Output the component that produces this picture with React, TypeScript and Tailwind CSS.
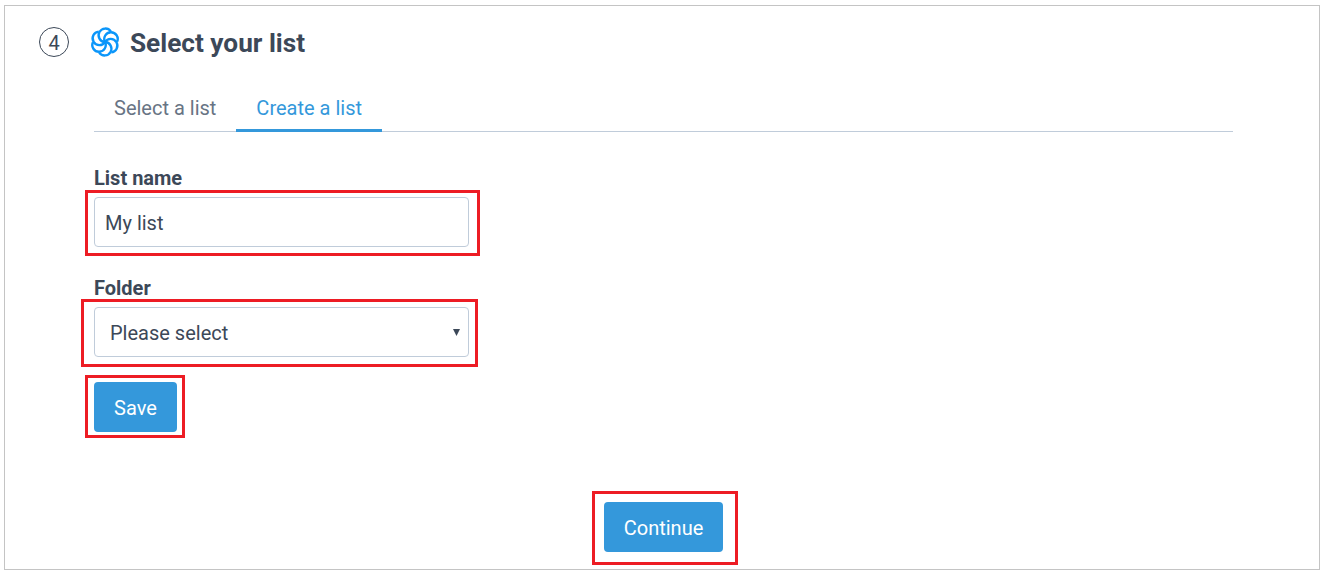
import React from "react";

function Logo() {
  const petals = [0, 60, 120, 180, 240, 300];
  return (
    <svg width="30" height="30" viewBox="0.5 0.5 29 29" fill="none" stroke="#0b96fa" strokeWidth="2.3">
      {petals.map((angle) => (
        <path key={angle} d="M15 15 A6.5 6.5 0 1 1 20.63 4.75" transform={`rotate(${angle} 15 15)`} />
      ))}
    </svg>
  );
}

function RedBox({ className }: { className: string }) {
  return <span className={`pointer-events-none absolute border-[3px] border-[#ed1c24] ${className}`} />;
}

export default function App() {
  return (
    <div className="h-[574px] w-[1326px] bg-white pl-1 pt-[5px] font-['Roboto',sans-serif] text-[#3c4858]">
      <div className="relative h-[565px] w-[1316px] border border-[#c4c4c4]">
        <div className="flex items-center pl-[34px] pt-[21px]">
          <div className="flex h-[30px] w-[30px] items-center justify-center rounded-full border border-[#3c4858] pt-[2px] text-xl leading-none">
            4
          </div>
          <div className="ml-[21px]">
            <Logo />
          </div>
          <h2 className="ml-[10px] h-[30px] text-[26.2px] font-bold leading-[32px]">Select your list</h2>
        </div>

        <div className="ml-[89px] mr-[86px] mt-[30px] flex border-b border-[#c0ccda] text-xl">
          <div className="px-5 pb-[9px] pt-2 leading-[27px] text-[#687484]">Select a list</div>
          <div className="-mb-px border-b-[3px] border-[#3498db] px-5 pb-[7px] pt-2 leading-[27px] text-[#3498db]">
            Create a list
          </div>
        </div>

        <form className="ml-[89px] mt-[33px] w-[375px]">
          <label className="block text-xl font-bold leading-[27px]">List name</label>
          <input
            defaultValue="My list"
            className="mt-[5px] block h-[50px] w-full rounded border border-[#c0ccda] px-[10px] pt-[2px] text-xl text-[#3c4858] outline-none"
          />
          <label className="mt-[28px] block text-xl font-bold leading-[27px]">Folder</label>
          <div className="relative mt-[5px]">
            <select className="block h-[50px] w-full appearance-none rounded border border-[#c0ccda] bg-white px-[15px] pt-[2px] text-xl text-[#3c4858] outline-none">
              <option>Please select</option>
            </select>
            <svg className="absolute left-[359px] top-[22px]" width="7" height="7" viewBox="0 0 7 7" fill="#3c4858">
              <path d="M0 0 H7 L3.5 7 Z" />
            </svg>
          </div>
          <button
            type="button"
            className="mt-[25px] block h-[50px] w-[83px] rounded bg-[#3498db] pt-[2px] text-xl text-white"
          >
            Save
          </button>
        </form>

        <div className="ml-[3px] mt-[70px] flex justify-center">
          <button type="button" className="h-[50px] w-[119px] rounded bg-[#3498db] pt-[2px] text-xl text-white">
            Continue
          </button>
        </div>

        <RedBox className="left-[80px] top-[184px] h-[66px] w-[395px]" />
        <RedBox className="left-[76px] top-[293px] h-[68px] w-[397px]" />
        <RedBox className="left-[80px] top-[369px] h-[63px] w-[100px]" />
        <RedBox className="left-[587px] top-[485px] h-[74px] w-[146px]" />
      </div>
    </div>
  );
}
